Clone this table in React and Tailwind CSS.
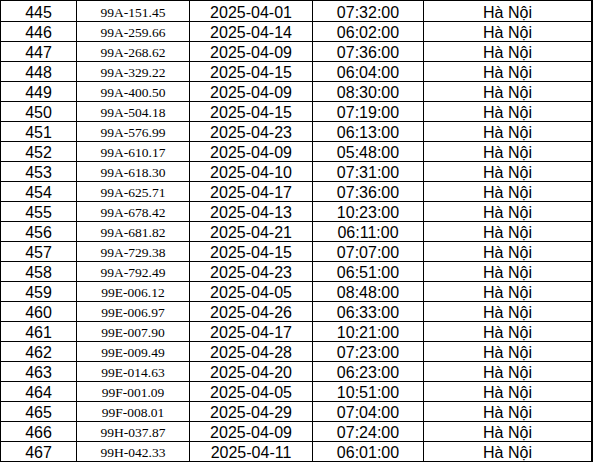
const rows = [
    ['445', '99A-151.45', '2025-04-01', '07:32:00'],
    ['446', '99A-259.66', '2025-04-14', '06:02:00'],
    ['447', '99A-268.62', '2025-04-09', '07:36:00'],
    ['448', '99A-329.22', '2025-04-15', '06:04:00'],
    ['449', '99A-400.50', '2025-04-09', '08:30:00'],
    ['450', '99A-504.18', '2025-04-15', '07:19:00'],
    ['451', '99A-576.99', '2025-04-23', '06:13:00'],
    ['452', '99A-610.17', '2025-04-09', '05:48:00'],
    ['453', '99A-618.30', '2025-04-10', '07:31:00'],
    ['454', '99A-625.71', '2025-04-17', '07:36:00'],
    ['455', '99A-678.42', '2025-04-13', '10:23:00'],
    ['456', '99A-681.82', '2025-04-21', '06:11:00'],
    ['457', '99A-729.38', '2025-04-15', '07:07:00'],
    ['458', '99A-792.49', '2025-04-23', '06:51:00'],
    ['459', '99E-006.12', '2025-04-05', '08:48:00'],
    ['460', '99E-006.97', '2025-04-26', '06:33:00'],
    ['461', '99E-007.90', '2025-04-17', '10:21:00'],
    ['462', '99E-009.49', '2025-04-28', '07:23:00'],
    ['463', '99E-014.63', '2025-04-20', '06:23:00'],
    ['464', '99F-001.09', '2025-04-05', '10:51:00'],
    ['465', '99F-008.01', '2025-04-29', '07:04:00'],
    ['466', '99H-037.87', '2025-04-09', '07:24:00'],
    ['467', '99H-042.33', '2025-04-11', '06:01:00'],
];

const sans = "border border-black text-center font-['Liberation_Sans',Arial,sans-serif] text-[16px] leading-[17px]";
const serif = "border border-black text-center font-['Liberation_Serif','Times_New_Roman',serif] text-[13.5px] leading-[17px]";

const App = () => {
    return (
        <div className="w-[594px] h-[463px] bg-white overflow-hidden">
            <table className="table-fixed border-collapse w-[593px] text-black border-t border-t-[#9a9a9a] border-l border-l-[#8a8a8a] border-r-2 border-r-black">
                <colgroup>
                    <col className="w-[76px]" />
                    <col className="w-[113px]" />
                    <col className="w-[123px]" />
                    <col className="w-[111px]" />
                    <col />
                </colgroup>
                <tbody>
                    {rows.map((r, i) => {
                        const pad = i === 0 ? ' pt-[3px] pb-0 px-0' : ' pt-[2px] pb-0 px-0';
                        return (
                            <tr key={r[0]}>
                                <td className={sans + pad}>{r[0]}</td>
                                <td className={serif + pad}>{r[1]}</td>
                                <td className={sans + pad}>{r[2]}</td>
                                <td className={sans + pad}>{r[3]}</td>
                                <td className={sans + pad}>Hà Nội</td>
                            </tr>
                        );
                    })}
                </tbody>
            </table>
        </div>
    );
};

export default App;
